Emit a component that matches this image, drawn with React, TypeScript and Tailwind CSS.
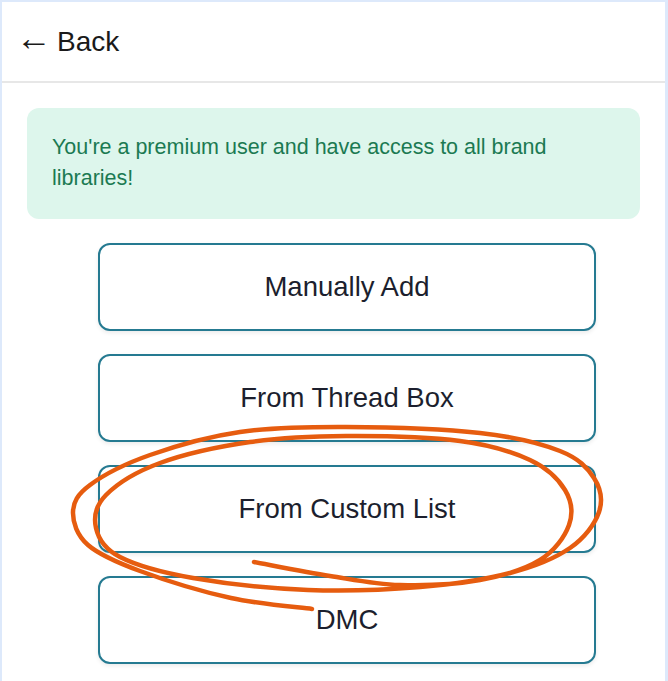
import React from "react";

type Pt = [number, number];

const pts: Pt[] = [
  [254, 562], [330, 576], [400, 585], [480, 580], [540, 560], [569, 525],
  [565, 490], [530, 460], [460, 441], [346, 436], [250, 442], [160, 463],
  [106, 495], [96, 528], [120, 557], [193, 578], [308, 590], [420, 587],
  [510, 573], [570, 548], [599, 512], [594, 478], [560, 451], [480, 433],
  [346, 427], [240, 432], [150, 455], [90, 485], [73, 512], [88, 545],
  [140, 571], [231, 598], [312, 609],
];

function catmull(p: Pt[]): string {
  let d = `M ${p[0][0]} ${p[0][1]}`;
  for (let i = 0; i < p.length - 1; i++) {
    const p0 = p[i - 1] || p[i];
    const p1 = p[i];
    const p2 = p[i + 1];
    const p3 = p[i + 2] || p2;
    const c1x = p1[0] + (p2[0] - p0[0]) / 6;
    const c1y = p1[1] + (p2[1] - p0[1]) / 6;
    const c2x = p2[0] - (p3[0] - p1[0]) / 6;
    const c2y = p2[1] - (p3[1] - p1[1]) / 6;
    d += ` C ${c1x.toFixed(1)} ${c1y.toFixed(1)}, ${c2x.toFixed(1)} ${c2y.toFixed(1)}, ${p2[0]} ${p2[1]}`;
  }
  return d;
}

const buttons = ["Manually Add", "From Thread Box", "From Custom List", "DMC"];

export default function App() {
  return (
    <div
      className="relative h-[681px] w-[668px] overflow-hidden bg-white"
      style={{ fontFamily: '"Liberation Sans", Arial, sans-serif' }}
    >
      <div className="h-full border-l-2 border-t-2 border-r-[3px] border-[#dde9fb] bg-white">
        <div className="flex h-[81px] items-center border-b-2 border-[#e7e7e7] pl-[14px]">
          <span className="flex items-center text-[28px] leading-none text-[#1a1a1a]">
            <span className="relative -top-[4px] text-[36px] leading-none">←</span>
            <span className="ml-[5px]">Back</span>
          </span>
        </div>
        <div className="px-[25px] pt-[25px]">
          <div className="rounded-[12px] bg-[#ddf6ec] px-[25px] pt-[24px] pb-[25px] text-[21.5px] leading-[31px] text-[#1b7a52]">
            You're a premium user and have access to all brand libraries!
          </div>
          <div className="ml-[71px] mt-[24px] flex w-[498px] flex-col gap-[23px]">
            {buttons.map((b) => (
              <div
                key={b}
                className="flex h-[88px] items-center justify-center rounded-[12px] border-2 border-[#257a91] bg-white text-[27.5px] text-[#1c1f2e] shadow-[0_2px_4px_rgba(0,0,0,0.08)]"
              >
                {b}
              </div>
            ))}
          </div>
        </div>
      </div>
      <svg
        className="pointer-events-none absolute left-0 top-0"
        width="668"
        height="681"
        viewBox="0 0 668 681"
      >
        <path
          d={catmull(pts)}
          fill="none"
          stroke="#e65c0f"
          strokeWidth="4.5"
          strokeLinecap="round"
          strokeLinejoin="round"
        />
      </svg>
    </div>
  );
}
